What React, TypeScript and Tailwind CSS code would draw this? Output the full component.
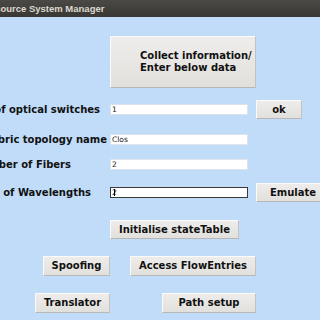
import React from "react";

const btn =
  "flex items-center justify-center bg-gradient-to-b from-[#eeedeb] to-[#e2e0dd] border border-t-[#fbfbfa] border-l-[#fbfbfa] border-b-[#b9b7b3] border-r-[#c4c2be] text-[10px] font-bold text-[#111] leading-none whitespace-nowrap";

function Label({ text, mr }: { text: string; mr: string }) {
  return (
    <div className="w-[110px] shrink-0 overflow-hidden flex justify-end">
      <span className={`whitespace-nowrap text-[10px] font-bold text-[#111] leading-none ${mr}`}>{text}</span>
    </div>
  );
}

function Input({ value, focused }: { value: string; focused?: boolean }) {
  return (
    <div
      className={`relative w-[138px] h-[11px] shrink-0 bg-white border ${
        focused ? "border-[#3a3a3a]" : "border-[#dde3ea]"
      } flex items-center pl-[1px] text-[7.5px] text-[#222] leading-none`}
    >
      <span>{value}</span>
      {focused && <span className="absolute left-[3px] top-[1px] w-[1px] h-[7px] bg-black" />}
    </div>
  );
}

export default function App() {
  return (
    <div className="w-[320px] h-[320px] overflow-hidden bg-[#c0dcf8] font-['DejaVu_Sans',sans-serif]">
      <div className="h-[17px] bg-gradient-to-b from-[#4a4945] to-[#393834] flex items-center overflow-hidden">
        <span className="ml-[-17px] whitespace-nowrap text-[9.5px] font-bold text-[#dcd8cf] font-['Liberation_Sans',sans-serif] leading-none">
          Resource System Manager
        </span>
      </div>

      <div className="pl-[110px] pt-[19px]">
        <div className={`${btn} w-[146px] h-[52px] flex-col !items-start pl-[29px] gap-[2px]`}>
          <span>Collect information/</span>
          <span>Enter below data</span>
        </div>
      </div>

      <div className="mt-[12px] h-[19px] flex items-center">
        <Label text="Number of optical switches" mr="mr-[10px]" />
        <Input value="1" />
        <div className={`${btn} ml-[8px] w-[46px] h-[19px]`}>ok</div>
      </div>

      <div className="mt-[11px] h-[19px] flex items-center">
        <Label text="Fabric topology name" mr="mr-[3px]" />
        <Input value="Clos" />
      </div>

      <div className="mt-[6px] h-[19px] flex items-center">
        <Label text="Number of Fibers" mr="mr-[39px]" />
        <Input value="2" />
      </div>

      <div className="mt-[9px] h-[19px] flex items-center">
        <Label text="Number of Wavelengths" mr="mr-[19px]" />
        <Input value="2" focused />
        <div className={`${btn} ml-[8px] w-[66px] h-[19px] shrink-0 !justify-start pl-[13px]`}>Emulate</div>
      </div>

      <div className="mt-[18px] pl-[110px]">
        <div className={`${btn} w-[129px] h-[19px]`}>Initialise stateTable</div>
      </div>

      <div className="mt-[17px] flex h-[20px]">
        <div className={`${btn} ml-[43px] w-[67px] h-[20px]`}>Spoofing</div>
        <div className={`${btn} ml-[20px] w-[126px] h-[20px]`}>Access FlowEntries</div>
      </div>

      <div className="mt-[17px] flex h-[20px]">
        <div className={`${btn} ml-[35px] w-[75px] h-[20px]`}>Translator</div>
        <div className={`${btn} ml-[52px] w-[94px] h-[20px]`}>Path setup</div>
      </div>
    </div>
  );
}
